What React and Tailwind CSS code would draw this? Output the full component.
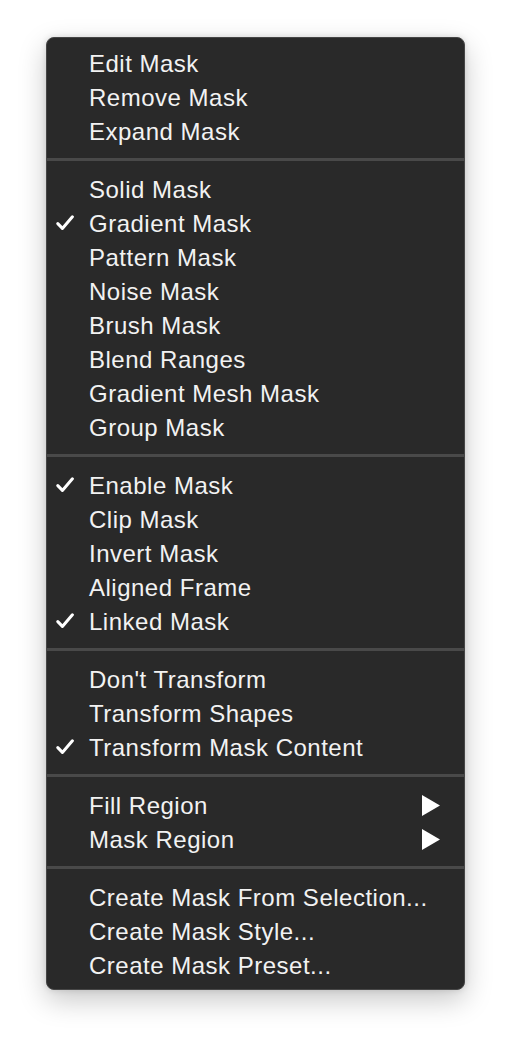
import React from 'react';

const groups = [
  [
    { label: 'Edit Mask' },
    { label: 'Remove Mask' },
    { label: 'Expand Mask' },
  ],
  [
    { label: 'Solid Mask' },
    { label: 'Gradient Mask', checked: true },
    { label: 'Pattern Mask' },
    { label: 'Noise Mask' },
    { label: 'Brush Mask' },
    { label: 'Blend Ranges' },
    { label: 'Gradient Mesh Mask' },
    { label: 'Group Mask' },
  ],
  [
    { label: 'Enable Mask', checked: true },
    { label: 'Clip Mask' },
    { label: 'Invert Mask' },
    { label: 'Aligned Frame' },
    { label: 'Linked Mask', checked: true },
  ],
  [
    { label: "Don't Transform" },
    { label: 'Transform Shapes' },
    { label: 'Transform Mask Content', checked: true },
  ],
  [
    { label: 'Fill Region', submenu: true },
    { label: 'Mask Region', submenu: true },
  ],
  [
    { label: 'Create Mask From Selection...' },
    { label: 'Create Mask Style...' },
    { label: 'Create Mask Preset...' },
  ],
];

function Check() {
  return (
    <svg width="18" height="16" viewBox="0 0 18 16" className="block">
      <path d="M1.8 8.6 L6.4 13.4 L16.4 1.8" fill="none" stroke="#ffffff" strokeWidth="3" strokeLinecap="round" strokeLinejoin="round" />
    </svg>
  );
}

function Arrow() {
  return (
    <svg width="18" height="21" viewBox="0 0 18 21" className="block">
      <polygon points="0,0 18,10.5 0,21" fill="#ffffff" />
    </svg>
  );
}

function MenuItem({ item }) {
  return (
    <div className="flex items-center h-[34px]">
      <div className="w-[42px] shrink-0 pl-[9px]">{item.checked && <Check />}</div>
      <span className="flex-1 pt-[2px] leading-[32px] whitespace-nowrap">{item.label}</span>
      {item.submenu && <div className="pr-[24px]"><Arrow /></div>}
    </div>
  );
}

export default function App() {
  return (
    <div className="min-h-[1044px] bg-white pt-[37px] pl-[46px]">
      <div
        className="w-[419px] rounded-[8px] border border-[#464646] bg-[#292929] pt-[8px] pb-[7px] text-[24px] tracking-[0.5px] text-[#f2f2f2] shadow-[0_10px_28px_rgba(0,0,0,0.22),0_0_6px_rgba(0,0,0,0.12)]"
        style={{ fontFamily: '"Liberation Sans", Arial, sans-serif' }}
      >
        {groups.map((group, gi) => (
          <div key={gi}>
            {gi > 0 && <div className="mt-[10px] mb-[11px] h-[3px] bg-[#494949]" />}
            {group.map((item) => (
              <MenuItem key={item.label} item={item} />
            ))}
          </div>
        ))}
      </div>
    </div>
  );
}
